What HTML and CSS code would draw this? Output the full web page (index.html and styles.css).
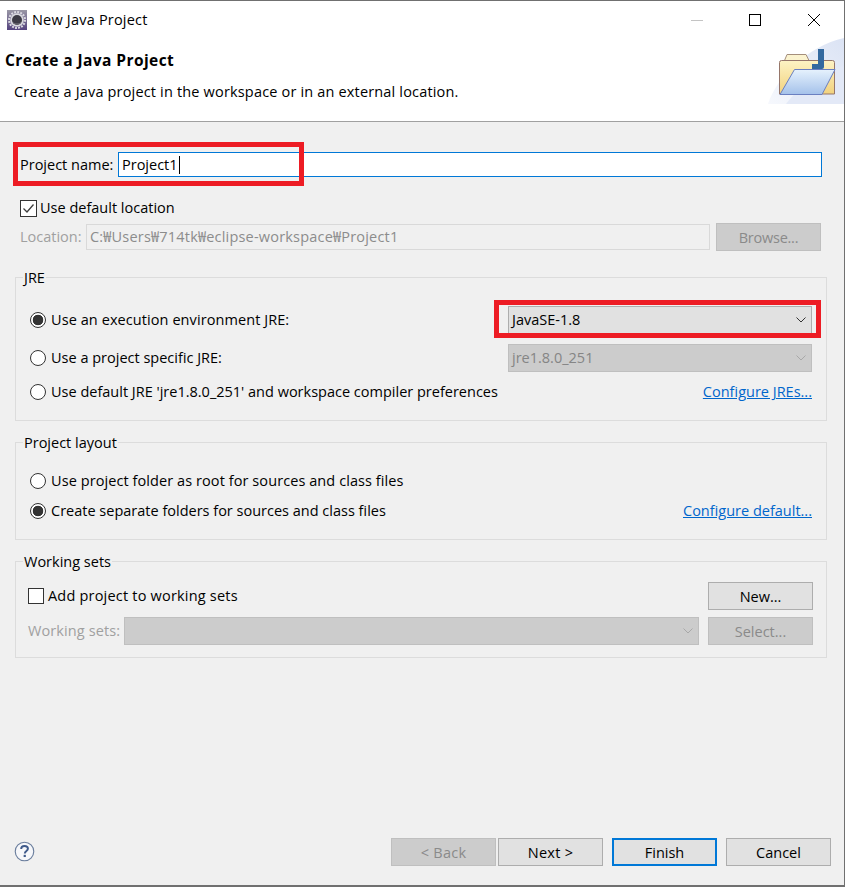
FILE: index.html
```html
<!DOCTYPE html>
<html lang="en">
<head>
    <meta charset="UTF-8">
    <meta name="viewport" content="width=device-width, initial-scale=1.0">
    <title>New Java Project</title>
    <link rel="stylesheet" href="styles.css">
</head>
<body>
    <div class="dialog">
        <header class="top">
            <div class="titlebar">
                <svg class="app-icon" width="20" height="20" viewBox="0 0 20 20">
                    <defs>
                        <linearGradient id="iconBg" x1="0" y1="0" x2="0" y2="1">
                            <stop offset="0" stop-color="#9a98a6"/>
                            <stop offset="1" stop-color="#54437f"/>
                        </linearGradient>
                    </defs>
                    <rect width="20" height="20" fill="url(#iconBg)"/>
                    <circle cx="10" cy="10" r="8" fill="none" stroke="#dcdce2" stroke-width="2" stroke-dasharray="1.900 1.240"/>
                    <circle cx="10" cy="10" r="6.800" fill="#d8d8de"/>
                    <circle cx="10" cy="10" r="5" fill="#3d3c46"/>
                    <path d="M6 12.500C7.500 14.500 12.500 14.500 14 12.500" fill="none" stroke="#77767f" stroke-width="1"/>
                </svg>
                <span class="window-title">New Java Project</span>
                <div class="window-buttons">
                    <span class="win-min"></span>
                    <span class="win-max"></span>
                    <svg class="win-close" width="12" height="12" viewBox="0 0 12 12">
                        <path d="M0 0L12 12M12 0L0 12" stroke="#000" stroke-width="1" fill="none"/>
                    </svg>
                </div>
            </div>
            <div class="banner">
                <div class="banner-text">
                    <h1>Create a Java Project</h1>
                    <p>Create a Java project in the workspace or in an external location.</p>
                </div>
                <svg class="banner-art" width="76" height="66" viewBox="0 0 76 66">
                    <defs>
                        <linearGradient id="swoosh" x1="0" y1="1" x2="1" y2="0">
                            <stop offset="0" stop-color="#f6f8fd"/>
                            <stop offset="1" stop-color="#dbe3f4"/>
                        </linearGradient>
                        <linearGradient id="folderBack" x1="0" y1="0" x2="0" y2="1">
                            <stop offset="0" stop-color="#fdf3c4"/>
                            <stop offset="1" stop-color="#f2d27e"/>
                        </linearGradient>
                        <linearGradient id="folderFront" x1="0" y1="0" x2="0" y2="1">
                            <stop offset="0" stop-color="#e6f2fd"/>
                            <stop offset="1" stop-color="#a4c1ea"/>
                        </linearGradient>
                    </defs>
                    <path d="M0 66C8 40 40 8 76 0V66Z" fill="url(#swoosh)"/>
                    <path d="M18 66C30 50 52 34 76 28V66Z" fill="#e3e9f7"/>
                    <path d="M16.500 22.500L19 16.500H38L41 22.500Z" fill="#fbf3cf" stroke="#a58f7c"/>
                    <path d="M11.500 56V24.500Q11.500 22.500 13.500 22.500H64.500Q66.500 22.500 66.500 24.500V56Z" fill="url(#folderBack)" stroke="#96766a"/>
                    <path d="M44 31V26H50V11H56V29Q56 31 54 31Z" fill="#33699f"/>
                    <path d="M26.500 31.500H67L54 56.500H12Z" fill="url(#folderFront)" stroke="#6a7fc0"/>
                </svg>
            </div>
        </header>

        <main class="content">
            <div class="form-rows">
                <div class="name-row">
                    <label class="name-label">Project name:</label>
                    <div class="text-field">Project1<span class="caret"></span></div>
                </div>
                <div class="check-row">
                    <span class="checkbox">
                        <svg width="13" height="11" viewBox="0 0 13 11">
                            <path d="M1.500 5.500L5 9L11.500 1.500" stroke="#3c3c3c" stroke-width="1.300" fill="none"/>
                        </svg>
                    </span>
                    <span>Use default location</span>
                </div>
                <div class="location-row">
                    <span class="muted location-label">Location:</span>
                    <div class="location-field">C:₩Users₩714tk₩eclipse-workspace₩Project1</div>
                    <button class="btn btn-off browse" type="button">Browse...</button>
                </div>
            </div>

            <fieldset class="group group-jre">
                <legend>JRE</legend>
                <div class="jre-grid">
                    <div class="option tracked"><span class="radio radio-on"></span>Use an execution environment JRE:</div>
                    <div class="combo">JavaSE-1.8
                        <svg width="10" height="6" viewBox="0 0 10 6"><path d="M.5 .5L5 5L9.500 .5" stroke="#333" fill="none"/></svg>
                    </div>
                    <div class="option"><span class="radio"></span>Use a project specific JRE:</div>
                    <div class="combo combo-off">jre1.8.0_251
                        <svg width="10" height="6" viewBox="0 0 10 6"><path d="M.5 .5L5 5L9.500 .5" stroke="#a8a8a8" fill="none"/></svg>
                    </div>
                    <div class="option"><span class="radio"></span>Use default JRE 'jre1.8.0_251' and workspace compiler preferences</div>
                    <a class="link" href="#">Configure JREs...</a>
                </div>
            </fieldset>

            <fieldset class="group group-layout">
                <legend>Project layout</legend>
                <div class="option tracked"><span class="radio"></span>Use project folder as root for sources and class files</div>
                <div class="layout-row">
                    <div class="option"><span class="radio radio-on"></span>Create separate folders for sources and class files</div>
                    <a class="link" href="#">Configure default...</a>
                </div>
            </fieldset>

            <fieldset class="group group-sets">
                <legend>Working sets</legend>
                <div class="sets-grid">
                    <div class="sets-check"><span class="checkbox checkbox-small"></span>Add project to working sets</div>
                    <button class="btn" type="button">New...</button>
                    <div class="sets-combo">
                        <span class="muted">Working sets:</span>
                        <div class="combo combo-off">
                            <span></span>
                            <svg width="10" height="6" viewBox="0 0 10 6"><path d="M.5 .5L5 5L9.500 .5" stroke="#a8a8a8" fill="none"/></svg>
                        </div>
                    </div>
                    <button class="btn btn-off" type="button">Select...</button>
                </div>
            </fieldset>
        </main>

        <footer class="footer">
            <svg class="help" width="21" height="21" viewBox="0 0 22 22">
                <circle cx="11" cy="11" r="9.700" fill="#f6f7fa" stroke="#6c7f9e" stroke-width="1.200"/>
                <path d="M7.500 8.500C7.500 6.300 9 5.300 11 5.300C13 5.300 14.600 6.400 14.600 8.200C14.600 10.400 11.300 10.500 11.300 13" fill="none" stroke="#3f5a8a" stroke-width="2"/>
                <rect x="10.100" y="14.500" width="2.300" height="2.300" fill="#3f5a8a"/>
            </svg>
            <div class="footer-buttons">
                <div class="nav-pair">
                    <button class="btn btn-off tracked" type="button">&lt; Back</button>
                    <button class="btn tracked" type="button">Next &gt;</button>
                </div>
                <button class="btn btn-default" type="button">Finish</button>
                <button class="btn" type="button">Cancel</button>
            </div>
        </footer>

        <!-- red marks drawn over the screenshot -->
        <div class="mark mark-name"></div>
        <div class="mark mark-jre"></div>
    </div>
</body>
</html>
```

FILE: styles.css
```css
* {
    box-sizing: border-box;
}

html, body {
    margin: 0;
    padding: 0;
}

body {
    width: 845px;
    height: 887px;
    overflow: hidden;
    background-color: #f0f0f0;
    color: #000;
    font-family: "Open Sans", "Noto Sans CJK KR", sans-serif;
    font-size: 14.5px;
    line-height: 20px;
}

.tracked {
    letter-spacing: 0.08px;
}

.dialog {
    position: relative;
    display: flex;
    flex-direction: column;
    height: 887px;
    border-top: 1px solid #707070;
    border-right: 1px solid #707070;
    border-bottom: 2px solid #707070;
}

/* Title bar and banner */
.top {
    background-color: #fff;
    border-bottom: 1px solid #a0a0a0;
    height: 121px;
}

.titlebar {
    display: flex;
    align-items: center;
    height: 37px;
    padding-left: 7px;
    padding-top: 1px;
}

.window-title {
    margin-left: 5px;
    letter-spacing: 0.2px;
}

.window-buttons {
    margin-left: auto;
    display: flex;
    align-items: center;
    padding-right: 24px;
}

.win-min {
    width: 12px;
    height: 1px;
    background-color: #c4c4c4;
    margin-right: 46px;
}

.win-max {
    width: 12px;
    height: 12px;
    border: 1px solid #000;
    margin-right: 47px;
}

.banner {
    display: flex;
    justify-content: space-between;
    height: 83px;
}

.banner-text {
    padding: 11px 0 0 5px;
}

.banner h1 {
    margin: 0;
    font-size: 15.5px;
    font-weight: 700;
    line-height: 22px;
    letter-spacing: 0.42px;
}

.banner p {
    margin: 11px 0 0 9px;
    letter-spacing: 0.17px;
}

.banner-art {
    flex: none;
}

/* Form */
.content {
    flex: 1;
    padding: 30px 17px 0 15px;
}

.form-rows {
    padding: 0 5px;
}

.name-row {
    display: flex;
    align-items: center;
    height: 25px;
}

.name-label {
    width: 98px;
}

.text-field {
    flex: 1;
    height: 25px;
    padding: 1px 3px;
    line-height: 21px;
    background-color: #fff;
    border: 1px solid #0078d7;
}

.caret {
    display: inline-block;
    width: 1px;
    height: 18px;
    margin-left: 1px;
    background-color: #000;
    vertical-align: -4px;
}

.check-row {
    display: flex;
    align-items: center;
    gap: 3px;
    margin-top: 21px;
    height: 20px;
}

.checkbox {
    display: flex;
    align-items: center;
    justify-content: center;
    flex: none;
    width: 17px;
    height: 17px;
    background-color: #fff;
    border: 1px solid #333;
}

.checkbox-small {
    width: 16px;
    height: 16px;
}

.location-row {
    display: flex;
    align-items: center;
    margin-top: 5px;
    height: 28px;
}

.muted {
    color: #a0a0a0;
}

.sets-combo .muted {
    letter-spacing: 0.1px;
}

.location-label {
    width: 66px;
}

.location-field {
    width: 624px;
    height: 26px;
    padding: 1px 3px;
    line-height: 22px;
    letter-spacing: 0.2px;
    color: #8c8c8c;
    background-color: #f0f0f0;
    border: 1px solid #d9d9d9;
}

.browse {
    margin: 0 1px 0 6px;
    letter-spacing: -0.25px;
}

/* Buttons and combos */
.btn {
    width: 105px;
    height: 28px;
    padding: 1px 0 0;
    font: inherit;
    color: #000;
    background-color: #e1e1e1;
    border: 1px solid #adadad;
}

.btn.tracked {
    letter-spacing: 0.25px;
}

.btn-off {
    color: #8a8a8a;
    background-color: #ccc;
    border-color: #bfbfbf;
}

.btn-default {
    border: 2px solid #0078d7;
}

.combo {
    display: flex;
    align-items: center;
    justify-content: space-between;
    height: 28px;
    padding: 0 5px 0 3px;
    background-color: #e1e1e1;
    border: 1px solid #adadad;
}

.combo-off {
    color: #858585;
    background-color: #ccc;
    border-color: #bfbfbf;
}

/* Groups */
.group {
    margin: 0;
    padding: 0 14px;
    min-width: 0;
    border: 1px solid #dcdcdc;
}

.group legend {
    margin-left: -7px;
    padding: 0 1px;
    line-height: 21px;
}

.group-jre {
    margin-top: 16px;
    padding-top: 18px;
    padding-bottom: 18px;
}

.group-layout {
    margin-top: 11px;
    padding-top: 18px;
    padding-bottom: 18px;
}

.group-sets {
    margin-top: 11px;
    padding: 10px 13px 12px 12px;
}

.group-sets legend {
    margin-left: -5px;
}

.option {
    display: flex;
    align-items: center;
    gap: 5px;
    height: 20px;
}

.radio {
    flex: none;
    width: 16px;
    height: 16px;
    border-radius: 50%;
    background-color: #fff;
    border: 1px solid #333;
}

.radio-on {
    background: radial-gradient(circle, #333 0, #333 5px, #fff 5.6px);
}

.jre-grid {
    display: grid;
    grid-template-columns: 1fr 304px;
    align-items: center;
    row-gap: 10px;
}

.link {
    color: #0066cc;
    justify-self: end;
}

.group-layout .option + .layout-row {
    margin-top: 10px;
}

.layout-row {
    display: flex;
    align-items: center;
    justify-content: space-between;
}

.sets-grid {
    display: grid;
    grid-template-columns: 1fr 105px;
    align-items: center;
    column-gap: 9px;
    row-gap: 7px;
}

.sets-check {
    display: flex;
    align-items: center;
    gap: 4px;
    letter-spacing: 0.2px;
}

.sets-combo {
    display: flex;
    align-items: center;
    justify-content: space-between;
}

.sets-combo .combo {
    width: 575px;
}

/* Footer */
.footer {
    display: flex;
    align-items: flex-start;
    justify-content: space-between;
    height: 47px;
    padding: 0 13px 19px 14px;
}

.help {
    margin-top: 3px;
}

.footer-buttons {
    display: flex;
    gap: 9px;
}

.nav-pair {
    display: flex;
    gap: 2px;
}

/* Red marks */
.mark {
    position: absolute;
    border: 5px solid #ed1c24;
}

.mark-name {
    left: 13px;
    top: 141px;
    width: 291px;
    height: 44px;
}

.mark-jre {
    left: 494px;
    top: 299px;
    width: 327px;
    height: 38px;
}
```
